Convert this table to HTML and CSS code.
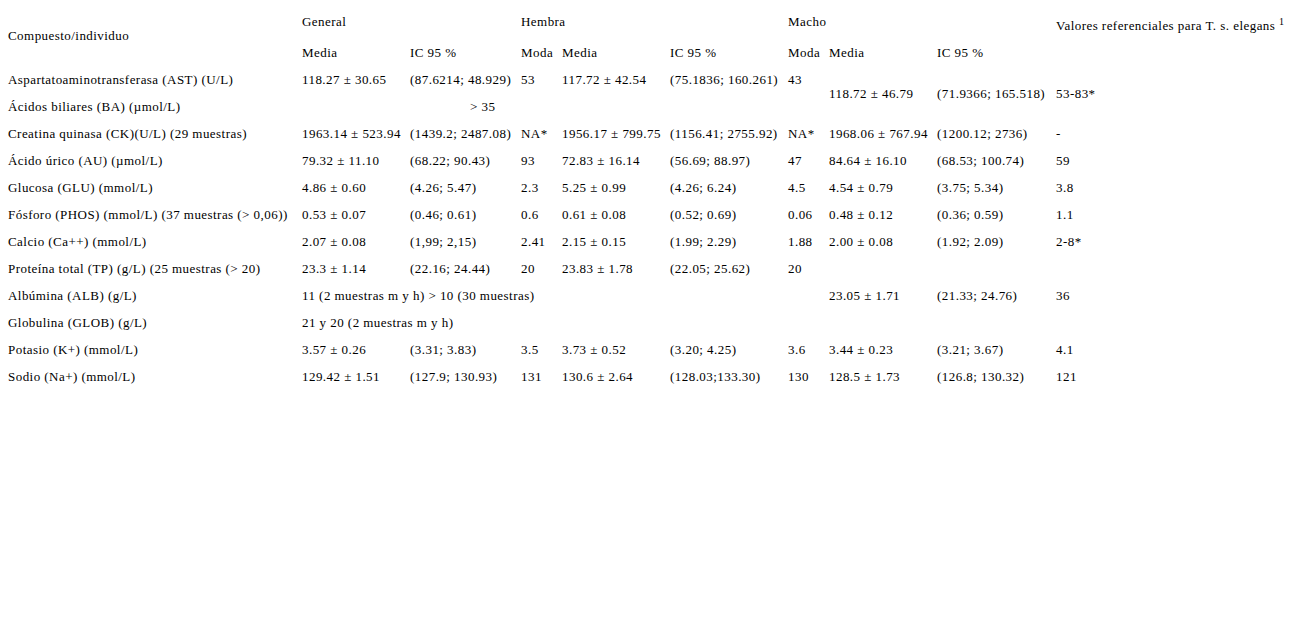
FILE: index.html
```html
<!DOCTYPE html>
<html lang="es">
<head>
<meta charset="utf-8">
<title>Tabla</title>
<link rel="stylesheet" href="styles.css">
</head>
<body>
<table class="data">
  <colgroup>
    <col class="c-name"><col class="c-media"><col class="c-ic"><col class="c-moda"><col class="c-media"><col class="c-ic2"><col class="c-moda"><col class="c-media"><col class="c-ic3"><col class="c-ref">
  </colgroup>
  <tr class="head1">
    <td class="name-head" rowspan="2">Compuesto/individuo</td>
    <td colspan="2">General</td>
    <td colspan="3">Hembra</td>
    <td colspan="3">Macho</td>
    <td class="ref-head" rowspan="2">Valores referenciales para T. s. elegans <sup>1</sup></td>
  </tr>
  <tr>
    <td>Media</td><td>IC 95 %</td>
    <td>Moda</td><td>Media</td><td>IC 95 %</td>
    <td>Moda</td><td>Media</td><td>IC 95 %</td>
  </tr>
  <tr>
    <td>Aspartatoaminotransferasa (AST) (U/L)</td>
    <td>118.27 ± 30.65</td><td>(87.6214; 48.929)</td>
    <td>53</td><td>117.72 ± 42.54</td><td>(75.1836; 160.261)</td>
    <td>43</td>
    <td rowspan="2">118.72 ± 46.79</td><td rowspan="2">(71.9366; 165.518)</td><td rowspan="2">53-83*</td>
  </tr>
  <tr>
    <td>Ácidos biliares (BA) (µmol/L)</td>
    <td colspan="2" class="gt35">&gt; 35</td>
    <td></td><td></td><td></td><td></td>
  </tr>
  <tr>
    <td>Creatina quinasa (CK)(U/L) (29 muestras)</td>
    <td>1963.14 ± 523.94</td><td>(1439.2; 2487.08)</td>
    <td>NA*</td><td>1956.17 ± 799.75</td><td>(1156.41; 2755.92)</td>
    <td>NA*</td><td>1968.06 ± 767.94</td><td>(1200.12; 2736)</td><td>-</td>
  </tr>
  <tr>
    <td>Ácido úrico (AU) (µmol/L)</td>
    <td>79.32 ± 11.10</td><td>(68.22; 90.43)</td>
    <td>93</td><td>72.83 ± 16.14</td><td>(56.69; 88.97)</td>
    <td>47</td><td>84.64 ± 16.10</td><td>(68.53; 100.74)</td><td>59</td>
  </tr>
  <tr>
    <td>Glucosa (GLU) (mmol/L)</td>
    <td>4.86 ± 0.60</td><td>(4.26; 5.47)</td>
    <td>2.3</td><td>5.25 ± 0.99</td><td>(4.26; 6.24)</td>
    <td>4.5</td><td>4.54 ± 0.79</td><td>(3.75; 5.34)</td><td>3.8</td>
  </tr>
  <tr>
    <td>Fósforo (PHOS) (mmol/L) (37 muestras (&gt; 0,06))</td>
    <td>0.53 ± 0.07</td><td>(0.46; 0.61)</td>
    <td>0.6</td><td>0.61 ± 0.08</td><td>(0.52; 0.69)</td>
    <td>0.06</td><td>0.48 ± 0.12</td><td>(0.36; 0.59)</td><td>1.1</td>
  </tr>
  <tr>
    <td>Calcio (Ca++) (mmol/L)</td>
    <td>2.07 ± 0.08</td><td>(1,99; 2,15)</td>
    <td>2.41</td><td>2.15 ± 0.15</td><td>(1.99; 2.29)</td>
    <td>1.88</td><td>2.00 ± 0.08</td><td>(1.92; 2.09)</td><td>2-8*</td>
  </tr>
  <tr>
    <td>Proteína total (TP) (g/L) (25 muestras (&gt; 20)</td>
    <td>23.3 ± 1.14</td><td>(22.16; 24.44)</td>
    <td>20</td><td>23.83 ± 1.78</td><td>(22.05; 25.62)</td>
    <td>20</td><td></td><td></td><td></td>
  </tr>
  <tr>
    <td>Albúmina (ALB) (g/L)</td>
    <td colspan="6">11 (2 muestras m y h) &gt; 10 (30 muestras)</td>
    <td>23.05 ± 1.71</td><td>(21.33; 24.76)</td><td>36</td>
  </tr>
  <tr>
    <td>Globulina (GLOB) (g/L)</td>
    <td colspan="9">21 y 20 (2 muestras m y h)</td>
  </tr>
  <tr>
    <td>Potasio (K+) (mmol/L)</td>
    <td>3.57 ± 0.26</td><td>(3.31; 3.83)</td>
    <td>3.5</td><td>3.73 ± 0.52</td><td>(3.20; 4.25)</td>
    <td>3.6</td><td>3.44 ± 0.23</td><td>(3.21; 3.67)</td><td>4.1</td>
  </tr>
  <tr>
    <td>Sodio (Na+) (mmol/L)</td>
    <td>129.42 ± 1.51</td><td>(127.9; 130.93)</td>
    <td>131</td><td>130.6 ± 2.64</td><td>(128.03;133.30)</td>
    <td>130</td><td>128.5 ± 1.73</td><td>(126.8; 130.32)</td><td>121</td>
  </tr>
</table>
</body>
</html>
```

FILE: styles.css
```css
html, body {
  margin: 0;
  background: #ffffff;
}
body {
  padding: 8px;
  font-family: "Liberation Serif", "Times New Roman", serif;
  font-size: 13px;
  letter-spacing: 0.45px;
  color: #000000;
}
.data {
  border-collapse: collapse;
  table-layout: fixed;
  width: 1279px;
}
.data td {
  padding: 0;
  height: 27px;
  vertical-align: middle;
  white-space: nowrap;
  line-height: 15px;
}
.data .head1 td {
  height: 27px;
  padding-bottom: 4px;
}
.data td.name-head {
  padding-bottom: 4px;
}
.c-name { width: 294px; }
.c-media { width: 108px; }
.c-ic { width: 111px; }
.c-moda { width: 41px; }
.c-ic2 { width: 118px; }
.c-ic3 { width: 119px; }
.c-ref { width: 231px; }
.data td.ref-head {
  vertical-align: top;
  padding-top: 10px;
  padding-bottom: 0;
}
.ref-head sup {
  font-size: 10px;
  line-height: 0;
}
.data td.gt35 {
  padding-left: 168px;
}
```
